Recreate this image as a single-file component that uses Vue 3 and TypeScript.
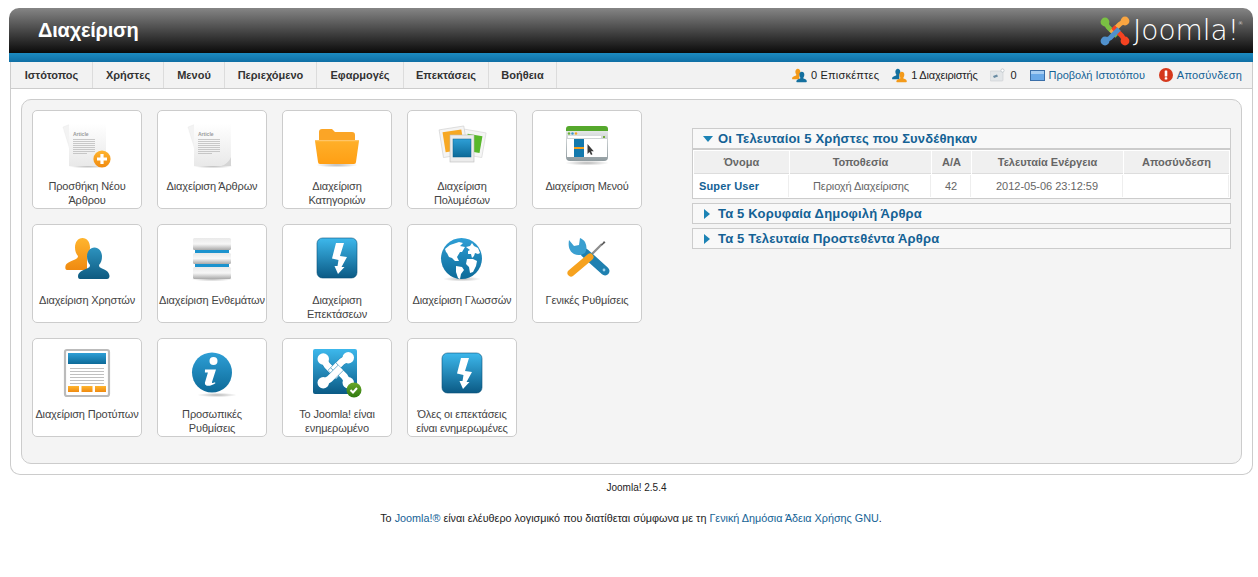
<script setup lang="ts">
interface Card { label: string; icon: string }
const cards: Card[] = [
  { label: 'Προσθήκη Νέου Άρθρου', icon: 'add' },
  { label: 'Διαχείριση Άρθρων', icon: 'article' },
  { label: 'Διαχείριση Κατηγοριών', icon: 'folder' },
  { label: 'Διαχείριση Πολυμέσων', icon: 'media' },
  { label: 'Διαχείριση Μενού', icon: 'menu' },
  { label: 'Διαχείριση Χρηστών', icon: 'users' },
  { label: 'Διαχείριση Ενθεμάτων', icon: 'modules' },
  { label: 'Διαχείριση Επεκτάσεων', icon: 'ext' },
  { label: 'Διαχείριση Γλωσσών', icon: 'globe' },
  { label: 'Γενικές Ρυθμίσεις', icon: 'tools' },
  { label: 'Διαχείριση Προτύπων', icon: 'template' },
  { label: 'Προσωπικές Ρυθμίσεις', icon: 'info' },
  { label: 'Το Joomla! είναι ενημερωμένο', icon: 'joomla' },
  { label: 'Όλες οι επεκτάσεις είναι ενημερωμένες', icon: 'ext2' },
]
const nav = [
  { t: 'Ιστότοπος', w: 82 },
  { t: 'Χρήστες', w: 71 },
  { t: 'Μενού', w: 61 },
  { t: 'Περιεχόμενο', w: 92 },
  { t: 'Εφαρμογές', w: 87 },
  { t: 'Επεκτάσεις', w: 85 },
  { t: 'Βοήθεια', w: 68 },
]
const docLines = [21, 23, 25, 27, 29, 31, 33, 35]
const weave = [
  'M5 6L8 11L17 20',
  'M25 5L20 8L11 17',
  'M25 25L22 20L13 11',
  'M5 25L10 22L19 13',
]
const weaveColors = ['#7ac143', '#f9a541', '#f44321', '#5091cd']
</script>

<template>
  <svg class="defs" width="0" height="0" aria-hidden="true">
    <defs>
      <linearGradient id="gPage" x1="0" y1="0" x2="0" y2="1"><stop offset="0" stop-color="#ffffff"/><stop offset="1" stop-color="#e9e9e9"/></linearGradient>
      <linearGradient id="gBlue" x1="0" y1="0" x2="0" y2="1"><stop offset="0" stop-color="#3db8ec"/><stop offset="1" stop-color="#0b5a85"/></linearGradient>
      <linearGradient id="gBlue2" x1="0" y1="0" x2="0" y2="1"><stop offset="0" stop-color="#2e9fd6"/><stop offset="1" stop-color="#0d6a98"/></linearGradient>
      <linearGradient id="gOrange" x1="0" y1="0" x2="0" y2="1"><stop offset="0" stop-color="#ffb52e"/><stop offset="1" stop-color="#f08a10"/></linearGradient>
      <linearGradient id="gPerson" x1="0" y1="0" x2="0" y2="1"><stop offset="0" stop-color="#2d93bf"/><stop offset="1" stop-color="#0e5a80"/></linearGradient>
      <linearGradient id="gSteel" x1="0" y1="0" x2="0" y2="1"><stop offset="0" stop-color="#e9e9e9"/><stop offset=".5" stop-color="#f7f7f7"/><stop offset="1" stop-color="#a9a9a9"/></linearGradient>
      <linearGradient id="gFolder" x1="0" y1="0" x2="0" y2="1"><stop offset="0" stop-color="#ffb02a"/><stop offset="1" stop-color="#ff9f14"/></linearGradient>
      <linearGradient id="gCheck" x1="0" y1="0" x2="0" y2="1"><stop offset="0" stop-color="#6aa82a"/><stop offset="1" stop-color="#2f7a10"/></linearGradient>
      <linearGradient id="gWin" x1="0" y1="0" x2="0" y2="1"><stop offset="0" stop-color="#e4e7e8"/><stop offset="1" stop-color="#8f9a9e"/></linearGradient>
      <radialGradient id="gShadow"><stop offset="0" stop-color="#000" stop-opacity=".28"/><stop offset="1" stop-color="#000" stop-opacity="0"/></radialGradient>
      <path id="pBack" d="M27.500 6C32 6 35 10 35 15.500C35 19 34 22 32 24L32 38L12 38C10.500 38 10 36 10.500 34C11 31 15 29.500 20 27.500C22 26.500 23 25.500 23 24C21 22 20 19 20 15.500C20 10 23 6 27.500 6z"/>
      <path id="pFront" d="M39.500 15.500C44 15.500 47 19.500 47 24.500C47 28 46 31 44 33C44 35 45 35.500 47 36.500C52 38.500 54 40 54.500 44C54.500 46 53.500 47 52 47L25 47C23.500 47 23 46 23 44C23.500 40 27 38.500 32 36.500C34 35.500 35 35 35 33C33 31 32 28 32 24.500C32 19.500 35 15.500 39.500 15.500z"/>
    </defs>
  </svg>

  <div class="page">
    <header class="topbar">
      <h1 class="title">Διαχείριση</h1>
      <div class="logo">
        <svg class="mark" viewBox="0 0 30 30" width="30" height="30">
          <path v-for="(d, i) in weave" :key="d" :d="d" fill="none" :stroke="weaveColors[i]" stroke-width="4.800" stroke-linejoin="round"/>
          <circle cx="5" cy="6" r="4.400" fill="#7ac143"/><circle cx="25" cy="5" r="4.400" fill="#f9a541"/>
          <circle cx="5" cy="25" r="4.400" fill="#5091cd"/><circle cx="25" cy="25" r="4.400" fill="#f44321"/>
        </svg>
        <span class="logotext">Joomla!<sup>®</sup></span>
      </div>
    </header>
    <div class="band"></div>
    <nav class="navbar">
      <ul class="menu">
        <li v-for="n in nav" :key="n.t" :style="{ width: n.w + 'px' }">{{ n.t }}</li>
      </ul>
      <div class="status">
        <span class="st st1">
          <svg class="si" viewBox="10 5 45 43" width="15" height="15"><use href="#pBack" fill="#f39a1a"/><use href="#pFront" fill="#14709f"/></svg>
          <b class="n1">0 Επισκέπτες</b>
        </span>
        <span class="st st2">
          <svg class="si" viewBox="10 5 45 43" width="15" height="15"><use href="#pBack" fill="#14709f"/><use href="#pFront" fill="#f39a1a"/></svg>
          <b class="n2">1 Διαχειριστής</b>
        </span>
        <span class="st st3">
          <svg class="si" viewBox="0 0 15 14" width="15" height="14"><rect x="0" y="3" width="13" height="10" rx="1" fill="#e3e6e8" stroke="#c9cdd0" stroke-width=".6"/><path d="M3 8l4-1.500 1 2-4 1.500z" fill="#6a8ca3"/><circle cx="12.500" cy="2.500" r="1.600" fill="#fff" stroke="#a9b3ba" stroke-width=".6"/></svg>
          0
        </span>
        <span class="st st4">
          <svg class="si" viewBox="0 0 15 11" width="15" height="11"><rect x=".5" y=".5" width="14" height="10" fill="#6aa9e8" stroke="#3a6ea8"/><rect x="1" y="1" width="13" height="3" fill="#a6cdf3"/></svg>
          <a class="view">Προβολή Ιστοτόπου</a>
        </span>
        <span class="st st5">
          <svg class="si" viewBox="0 0 14 14" width="14" height="14"><circle cx="7" cy="7" r="7" fill="#d5381c"/><rect x="5.700" y="2.500" width="2.600" height="6" rx=".6" fill="#fff"/><rect x="5.700" y="9.300" width="2.600" height="2.300" rx=".6" fill="#fff"/></svg>
          <a class="out">Αποσύνδεση</a>
        </span>
      </div>
    </nav>

    <main class="content">
      <div class="panel">
        <section class="grid">
          <a v-for="c in cards" :key="c.label" class="card">
            <svg class="ico" viewBox="0 0 64 56" width="64" height="56">
              <template v-if="c.icon === 'add' || c.icon === 'article'">
                <ellipse cx="33" cy="48" rx="20" ry="2.500" fill="url(#gShadow)"/>
                <path d="M8 9l8-3 8 38-5 1z" fill="#f3f3f3" stroke="#e6e6e6" stroke-width=".4"/>
                <rect x="14" y="5" width="37" height="43" fill="url(#gPage)"/>
                <text x="18" y="18" class="arttext">Article</text>
                <rect v-for="y in docLines" :key="y" x="18" :y="y" :width="y === 35 ? 14 : 22" height=".7" fill="#b5b5b5"/>
                <template v-if="c.icon === 'add'">
                  <circle cx="47" cy="41" r="8.600" fill="url(#gOrange)"/>
                  <path d="M45.400 36h3.200v3.400H52v3.200h-3.400V46h-3.200v-3.400H42v-3.200h3.400z" fill="#fff"/>
                </template>
                <path v-else d="M51 39v9H41c4-1 8-4 10-9z" fill="#d5d5d5"/>
              </template>

              <template v-else-if="c.icon === 'folder'">
                <ellipse cx="32" cy="47" rx="21" ry="2.500" fill="url(#gShadow)"/>
                <path d="M14 14a3 3 0 0 1 3-3h10l3 3h17a3 3 0 0 1 3 3v6H14z" fill="#fba526"/>
                <path d="M10 23a1 1 0 0 1 1-1h42a1 1 0 0 1 1 1l-3 21a2 2 0 0 1-2 2H15a2 2 0 0 1-2-2z" fill="url(#gFolder)"/>
                <path d="M10 22h44v1.200H10z" fill="#ffc566"/>
              </template>

              <template v-else-if="c.icon === 'media'">
                <g transform="rotate(10 44 26)"><rect x="32" y="13" width="22" height="25" fill="#f5f5f5" stroke="#d5d5d5" stroke-width=".6"/><rect x="36" y="17" width="15" height="17" fill="#58b82a"/></g>
                <g transform="rotate(-9 22 23)"><rect x="11" y="10" width="25" height="28" fill="#f4f4f4" stroke="#ccc" stroke-width=".6"/><rect x="14" y="13" width="19" height="20" fill="#f7a823"/></g>
                <rect x="20" y="17" width="24" height="27" fill="#ececec" stroke="#bdbdbd" stroke-width=".6"/>
                <rect x="23" y="21" width="18" height="18" fill="url(#gBlue2)" stroke="#0a5f8a" stroke-width=".5"/>
              </template>

              <template v-else-if="c.icon === 'menu'">
                <ellipse cx="32" cy="45" rx="22" ry="2.500" fill="url(#gShadow)"/>
                <path d="M11 11a3 3 0 0 1 3-3h36a3 3 0 0 1 3 3v2H11z" fill="#55a82c"/>
                <path d="M11 13h42v26a4 4 0 0 1-4 4H15a4 4 0 0 1-4-4z" fill="url(#gWin)"/>
                <circle cx="14" cy="15.500" r="1.200" fill="#6bb13a"/><circle cx="17.500" cy="15.500" r="1.200" fill="#3b97c8"/><circle cx="21" cy="15.500" r="1.200" fill="#f5a623"/>
                <rect x="13" y="18" width="33" height="2" fill="#fff"/><rect x="48" y="18" width="2" height="2" fill="#74ad3c"/>
                <rect x="12" y="21" width="40" height="18" fill="#fff"/>
                <rect x="19" y="21" width="10" height="18" fill="#1379ad"/>
                <rect x="19" y="29" width="10" height="2" fill="#f5a21f"/>
                <path d="M32.500 26v10l2-2 1.500 3 1.500-.8-1.500-3h2.800z" fill="#3c3c3c"/>
              </template>

              <template v-else-if="c.icon === 'users'">
                <use href="#pBack" fill="url(#gOrange)"/>
                <use href="#pFront" fill="url(#gPerson)"/>
              </template>

              <template v-else-if="c.icon === 'modules'">
                <ellipse cx="32" cy="47" rx="21" ry="2.500" fill="url(#gShadow)"/>
                <rect x="15" y="18" width="34" height="3" fill="#1c93ce"/><rect x="15" y="32" width="34" height="3" fill="#1c93ce"/>
                <rect x="13" y="6" width="38" height="12" rx="1.500" fill="url(#gSteel)"/>
                <rect x="13" y="21" width="38" height="11" rx="1.500" fill="url(#gSteel)"/>
                <rect x="13" y="35" width="38" height="12" rx="1.500" fill="url(#gSteel)"/>
              </template>

              <template v-else-if="c.icon === 'ext' || c.icon === 'ext2'">
                <g :transform="c.icon === 'ext2' ? 'translate(0 1)' : undefined">
                  <rect x="12" y="6" width="40" height="40" rx="5.500" fill="url(#gBlue)" stroke="#0c5378" stroke-width=".6"/>
                  <path d="M31 11L39 11L35 24L42 25L36.500 35L39.500 35L33 42L29.500 34L32.500 34L33.500 28L27 26.500z" fill="#fff"/>
                </g>
              </template>

              <template v-else-if="c.icon === 'globe'">
                <ellipse cx="32" cy="47" rx="19" ry="2.500" fill="url(#gShadow)"/>
                <circle cx="31.500" cy="26.500" r="20.500" fill="url(#gBlue2)"/>
                <path d="M15 17l5-4 9-3 4 1-3 3 5 1-3 5-2 0-3 5 2 4-4 0-3-3-3-1-2-4-1-1z" fill="#fff"/>
                <path d="M26 34l6 1 2 3-3 4-1 5-2-1-2-6z" fill="#fff"/>
                <path d="M36 15l4-1 2-3 2 3 4 2 2 5-2 1-3-1-1 3-2 2-1-4-3 0 0-3 2-1z" fill="#fff"/>
                <path d="M37 27l6 0 4 2-1 5-3 6-3 1-1-6-3-3z" fill="#fff"/>
              </template>

              <template v-else-if="c.icon === 'tools'">
                <path d="M34 25L47 12" stroke="#8d8d8d" stroke-width="2.200"/>
                <path d="M46 13l3-4 1.500 1.500-3.500 3z" fill="#5a5a5a"/>
                <path d="M50 39L30 21" stroke="#1f80b0" stroke-width="9" stroke-linecap="round"/>
                <path d="M14 8c-1 6 0 11 5 14 4 2 8 1 11-1 2-3 2-7 0-11-1-2-3-3-5-4l-1 7-5 1z" fill="#3a9fd0"/>
                <circle cx="49" cy="38" r="1.400" fill="#9fd4ee"/>
                <path d="M16 41L35 25" stroke="#f6a21f" stroke-width="7" stroke-linecap="round"/>
              </template>

              <template v-else-if="c.icon === 'template'">
                <rect x="10" y="4" width="44" height="46" rx="2" fill="#fff" stroke="#bbb" stroke-width="2.200"/>
                <rect x="13" y="7" width="38" height="11" fill="url(#gBlue2)"/>
                <rect v-for="y in [22, 25, 28, 31, 34, 37]" :key="y" x="15" :y="y" width="34" height=".7" fill="#a5a5a5"/>
                <rect x="13" y="40" width="11" height="6" fill="url(#gOrange)"/><rect x="26.500" y="40" width="11" height="6" fill="url(#gOrange)"/><rect x="40" y="40" width="11" height="6" fill="url(#gOrange)"/>
              </template>

              <template v-else-if="c.icon === 'info'">
                <ellipse cx="37" cy="49" rx="20" ry="2.200" fill="url(#gShadow)"/>
                <circle cx="32" cy="26.500" r="20" fill="url(#gBlue2)"/>
                <circle cx="33.500" cy="15" r="4" fill="#fff"/>
                <path d="M25 23.500h11l-4 12.500c-.3 1.200.8 1.400 3 .2l.4 1c-4 3-11 4-10.500-.5l3-10.200h-3z" fill="#fff"/>
              </template>

              <template v-else-if="c.icon === 'joomla'">
                <rect x="8" y="3" width="44" height="45" rx="2" fill="url(#gBlue)"/>
                <g transform="translate(12 5.500) scale(1.250)" fill="none" stroke-linejoin="round">
                  <g v-for="d in weave" :key="d">
                    <path :d="d" stroke="#1a7fb0" stroke-width="6.200"/>
                    <path :d="d" stroke="#fff" stroke-width="5.400"/>
                  </g>
                  <g fill="#fff">
                    <circle cx="5" cy="6" r="4.600"/><circle cx="25" cy="5" r="4.600"/>
                    <circle cx="5" cy="25" r="4.600"/><circle cx="25" cy="25" r="4.600"/>
                  </g>
                </g>
                <circle cx="49" cy="44" r="7.500" fill="url(#gCheck)"/>
                <path d="M45.500 44l2.500 2.500 4-4.500" fill="none" stroke="#fff" stroke-width="2"/>
              </template>
            </svg>
            <span class="cap">{{ c.label }}</span>
          </a>
        </section>

        <aside class="side">
          <section class="acc">
            <h3 class="acc-h"><i class="arrow down"></i>Οι Τελευταίοι 5 Χρήστες που Συνδέθηκαν</h3>
            <table class="tbl">
              <colgroup><col class="c1"><col class="c2"><col class="c3"><col class="c4"><col class="c5"></colgroup>
              <thead>
                <tr><th>Όνομα</th><th>Τοποθεσία</th><th>Α/Α</th><th>Τελευταία Ενέργεια</th><th>Αποσύνδεση</th></tr>
              </thead>
              <tbody>
                <tr><td class="user">Super User</td><td class="loc">Περιοχή Διαχείρισης</td><td>42</td><td>2012-05-06 23:12:59</td><td></td></tr>
              </tbody>
            </table>
          </section>
          <section class="acc">
            <h3 class="acc-h"><i class="arrow"></i>Τα 5 Κορυφαία Δημοφιλή Άρθρα</h3>
          </section>
          <section class="acc">
            <h3 class="acc-h"><i class="arrow"></i>Τα 5 Τελευταία Προστεθέντα Άρθρα</h3>
          </section>
        </aside>
      </div>
    </main>

    <footer class="foot">
      <p class="ver">Joomla! 2.5.4</p>
      <p class="lic">Το <a>Joomla!®</a> είναι ελέυθερο λογισμικό που διατίθεται σύμφωνα με τη <a>Γενική Δημόσια Άδεια Χρήσης GNU</a>.</p>
    </footer>
  </div>
</template>

<style scoped>
.defs { position: absolute; }
.page { width: 1244px; margin-left: 9px; padding-top: 8px; font-family: "Liberation Sans", Arial, sans-serif; font-size: 11px; color: #333; }
.topbar { height: 45px; border-radius: 10px 10px 0 0; background: linear-gradient(#858585, #0a0a0a); display: flex; align-items: center; justify-content: space-between; padding: 0 10px 0 29px; box-sizing: border-box; }
.title { margin: 0; font-size: 20px; font-weight: bold; color: #fff; line-height: 45px; letter-spacing: -.2px; }
.logo { display: flex; align-items: center; gap: 3px; margin-top: 1px; }
.mark { display: block; }
.logotext { font-family: "DejaVu Sans", "Liberation Sans", sans-serif; font-weight: 200; font-size: 28px; line-height: 30px; color: #fff; letter-spacing: 0; }
.logotext sup { font-size: 5px; vertical-align: top; line-height: 14px; letter-spacing: 0; margin-left: -1px; }
.band { height: 9px; background: linear-gradient(#1c8bc1, #0f6fa5); }
.navbar { height: 26px; margin-left: 1px; display: flex; justify-content: space-between; background: #f2f2f2; border-bottom: 1px solid #ccc; border-right: 1px solid #ccc; border-left: 1px solid #ccc; }
.menu { list-style: none; margin: 0; padding: 0; display: flex; }
.menu li { box-sizing: border-box; text-align: center; border-right: 1px solid #dcdcdc; line-height: 26px; font-weight: bold; color: #333; white-space: nowrap; }
.status { display: flex; align-items: center; padding-right: 10px; color: #222; }
.st { display: flex; align-items: center; gap: 4px; white-space: nowrap; }
.st b { font-weight: normal; }
.st a { color: #146295; }
.n1 { letter-spacing: .2px; }
.n2 { letter-spacing: -.2px; }
.view { letter-spacing: -.05px; }
.out { letter-spacing: .2px; }
.st2 { margin-left: 13px; }
.st3 { margin-left: 13px; gap: 5px; }
.st4 { margin-left: 13px; }
.st5 { margin-left: 14px; }
.content { margin-left: 1px; background: #fff; border: 1px solid #ccc; border-top: 0; border-radius: 0 0 10px 10px; padding: 10px; height: 386px; box-sizing: border-box; }
.panel { height: 365px; box-sizing: border-box; background: #f4f4f4; border: 1px solid #ccc; border-radius: 10px; padding: 10px; display: flex; }
.grid { width: 660px; display: grid; grid-template-columns: repeat(5, 110px); grid-auto-rows: 99px; column-gap: 15px; row-gap: 15px; align-content: start; }
.card { box-sizing: border-box; background: #fff; border: 1px solid #ccc; border-radius: 5px; padding: 7px 0 0; display: flex; flex-direction: column; align-items: center; overflow: hidden; }
.ico { flex: none; display: block; }
.arttext { font-size: 5px; font-family: "Liberation Sans", sans-serif; fill: #999; font-weight: bold; }
.cap { margin-top: 5px; line-height: 14px; text-align: center; color: #444; width: 108px; letter-spacing: -.15px; }
.side { width: 539px; margin-top: 18px; display: flex; flex-direction: column; gap: 4px; flex: none; }
.acc { border: 1px solid #ccc; background: #f8f8f8; }
.acc-h { margin: 0; height: 19px; line-height: 20px; font-size: 13px; font-weight: bold; color: #146295; padding-left: 10px; display: flex; align-items: center; letter-spacing: .18px; }
.arrow { width: 0; height: 0; margin-left: 1px; border-style: solid; border-width: 5px 0 5px 6px; border-color: transparent transparent transparent #1c83b5; display: block; margin-right: 8px; }
.arrow.down { border-width: 6px 5px 0 5px; border-color: #1c83b5 transparent transparent transparent; margin-left: 0; margin-right: 5px; }
.tbl { width: 100%; border-collapse: separate; border-spacing: 1px; table-layout: fixed; border-top: 2px solid #ccc; background: #fff; font-size: 11px; }
.c1 { width: 95px; } .c2 { width: 141px; } .c3 { width: 39px; } .c4 { width: 151px; }
.tbl th { height: 22px; padding: 0; background: #f0f0f0; color: #666; font-weight: bold; border-bottom: 1px solid #ddd; }
.tbl td { height: 22px; padding: 0; text-align: center; color: #666; background: #fff; border-right: 1px solid #eee; }
.tbl td.user { text-align: left; padding-left: 5px; color: #146295; font-weight: bold; letter-spacing: .15px; }
.tbl td.loc { letter-spacing: -.1px; padding-left: 2px; box-sizing: border-box; }
.foot { font-size: 10px; color: #222; text-align: center; }
.foot p { margin: 0; }
.foot a { color: #146295; }
.ver { padding: 7px 0 0 11px; line-height: 12px; }
.lic { padding-top: 18px; line-height: 12px; font-size: 10.800px; }
</style>

<style>
html, body { background: #fff; }
</style>
